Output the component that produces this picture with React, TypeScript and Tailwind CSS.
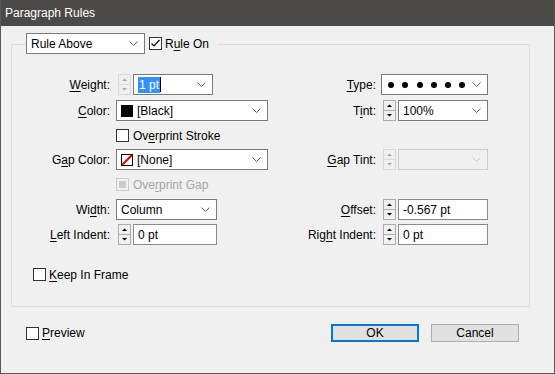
const Chevron = ({ light }: { light?: boolean }) => (
  <svg width="9" height="5" viewBox="0 0 9 5" className="shrink-0">
    <polyline
      points="0.5,0.5 4.5,4.5 8.5,0.5"
      fill="none"
      stroke={light ? "#c9c9c9" : "#5f5f5f"}
      strokeWidth="1"
    />
  </svg>
);

const Spinner = ({ disabled }: { disabled?: boolean }) => {
  const line = disabled ? "#d9d9d9" : "#adadad";
  const tri = disabled ? "#a8a8a8" : "#000";
  return (
    <svg width="13" height="21" viewBox="0 0 13 21" className="shrink-0">
      <rect x="0.5" y="0.5" width="12" height="20" fill="#f0f0f0" stroke={line} />
      <line x1="0" y1="10.5" x2="13" y2="10.5" stroke={line} />
      <polygon points="4,7 9,7 6.5,4.5" fill={tri} />
      <polygon points="4,14 9,14 6.5,16.5" fill={tri} />
    </svg>
  );
};

const Box = ({ checked, disabled }: { checked?: boolean; disabled?: boolean }) => (
  <div
    className={`w-[13px] h-[13px] shrink-0 border flex items-center justify-center ${
      disabled ? "border-[#cccccc] bg-[#f0f0f0]" : "border-[#333333] bg-white"
    }`}
  >
    {disabled && <div className="w-[7px] h-[7px] bg-[#cccccc]" />}
    {checked && (
      <svg width="11" height="11" viewBox="0 0 11 11">
        <polyline points="1.5,5.5 4,8 9.5,2" fill="none" stroke="#000" strokeWidth="1.2" />
      </svg>
    )}
  </div>
);

const Select = ({ w, children, disabled }: any) => (
  <div
    style={{ width: w }}
    className={`h-[21px] shrink-0 flex items-center justify-between pl-[4px] pr-[6px] border ${
      disabled ? "border-[#cccccc] bg-[#f0f0f0]" : "border-[#7a7a7a] bg-white"
    }`}
  >
    <div className="flex items-center gap-[4px] whitespace-nowrap">{children}</div>
    <Chevron light={disabled} />
  </div>
);

const Field = ({ w, children }: any) => (
  <div
    style={{ width: w }}
    className="h-[21px] shrink-0 flex items-center pl-[4px] border border-[#8a8a8a] bg-white whitespace-nowrap"
  >
    {children}
  </div>
);

const LeftLabel = ({ children }: any) => (
  <div className="w-[98px] text-right shrink-0 whitespace-nowrap">{children}</div>
);

const RightLabel = ({ children }: any) => (
  <div className="w-[100px] text-right shrink-0 whitespace-nowrap">{children}</div>
);

const Half = ({ children }: any) => <div className="w-[264px] shrink-0 flex items-center">{children}</div>;

export default function App() {
  return (
    <div className="w-[555px] h-[374px] bg-[#f0f0f0] border-x border-b border-[#585858] text-[12px] text-black font-['Liberation_Sans',Arial,sans-serif] leading-none flex flex-col overflow-hidden">
      <div className="h-[26px] shrink-0 bg-[#4c4a47] text-white text-[12px] flex items-center pl-[4px]">
        Paragraph Rules
      </div>

      <div className="ml-[10px] mt-[18px] w-[519px] h-[263px] border border-[#dcdcdc] flex flex-col">
        <div className="-mt-[12px] ml-[14px] w-fit flex items-center bg-[#f0f0f0] pr-[9px]">
          <Select w={119}>
            <span className="h-[20px] flex items-center">Rule Above</span>
          </Select>
          <div className="ml-[4px] flex items-center gap-[3px]">
            <Box checked />
            <span>
              R<u className="underline-offset-2">u</u>le On
            </span>
          </div>
        </div>

        <div className="mt-[20px] flex h-[21px]">
          <Half>
            <LeftLabel>
              <u className="underline-offset-2">W</u>eight:
            </LeftLabel>
            <div className="ml-[8px] flex items-center gap-[2px]">
              <Spinner disabled />
              <Select w={80}>
                <div className="flex items-center gap-0">
                  <span className="bg-[#3391ff] text-white px-[1px] py-[2px]">1 pt</span>
                  <span className="w-px h-[15px] bg-black" />
                </div>
              </Select>
            </div>
          </Half>
          <Half>
            <RightLabel>
              <u className="underline-offset-2">T</u>ype:
            </RightLabel>
            <div className="ml-[5px]">
              <Select w={107}>
                <div className="flex gap-[8.3px] pl-[2px]">
                  {[0, 1, 2, 3, 4, 5].map((i) => (
                    <span key={i} className="w-[6px] h-[6px] rounded-full bg-black" />
                  ))}
                </div>
              </Select>
            </div>
          </Half>
        </div>

        <div className="mt-[5px] flex h-[21px]">
          <Half>
            <LeftLabel>
              <u className="underline-offset-2">C</u>olor:
            </LeftLabel>
            <div className="ml-[6px]">
              <Select w={152}>
                <span className="w-[12px] h-[12px] bg-black" />
                <span>[Black]</span>
              </Select>
            </div>
          </Half>
          <Half>
            <RightLabel>
              T<u className="underline-offset-2">i</u>nt:
            </RightLabel>
            <div className="ml-[7px] flex items-center gap-[2px]">
              <Spinner />
              <Select w={90}>
                <span>100%</span>
              </Select>
            </div>
          </Half>
        </div>

        <div className="mt-[8px] flex h-[13px] items-center">
          <div className="ml-[104px] flex items-center gap-[4px]">
            <Box />
            <span>
              Ov<u className="underline-offset-2">e</u>rprint Stroke
            </span>
          </div>
        </div>

        <div className="mt-[7px] flex h-[21px]">
          <Half>
            <LeftLabel>
              G<u className="underline-offset-2">a</u>p Color:
            </LeftLabel>
            <div className="ml-[6px]">
              <Select w={152}>
                <svg width="12" height="12" viewBox="0 0 12 12">
                  <rect x="0.5" y="0.5" width="11" height="11" fill="#fff" stroke="#000" />
                  <line x1="1" y1="11" x2="11" y2="1" stroke="#e00000" strokeWidth="2" />
                </svg>
                <span>[None]</span>
              </Select>
            </div>
          </Half>
          <Half>
            <RightLabel>
              <u className="underline-offset-2">G</u>ap Tint:
            </RightLabel>
            <div className="ml-[7px] flex items-center gap-[2px]">
              <Spinner disabled />
              <Select w={90} disabled>
                <span />
              </Select>
            </div>
          </Half>
        </div>

        <div className="mt-[8px] flex h-[13px] items-center">
          <div className="ml-[104px] flex items-center gap-[4px] text-[#a6a6a6]">
            <Box disabled />
            <span>
              Ove<u className="underline-offset-2">r</u>print Gap
            </span>
          </div>
        </div>

        <div className="mt-[8px] flex h-[21px]">
          <Half>
            <LeftLabel>
              Wi<u className="underline-offset-2">d</u>th:
            </LeftLabel>
            <div className="ml-[6px]">
              <Select w={101}>
                <span>Column</span>
              </Select>
            </div>
          </Half>
          <Half>
            <RightLabel>
              <u className="underline-offset-2">O</u>ffset:
            </RightLabel>
            <div className="ml-[7px] flex items-center gap-[2px]">
              <Spinner />
              <Field w={90}>-0.567 pt</Field>
            </div>
          </Half>
        </div>

        <div className="mt-[4px] flex h-[21px]">
          <Half>
            <LeftLabel>
              <u className="underline-offset-2">L</u>eft Indent:
            </LeftLabel>
            <div className="ml-[8px] flex items-center gap-[2px]">
              <Spinner />
              <Field w={84}>0 pt</Field>
            </div>
          </Half>
          <Half>
            <RightLabel>
              Rig<u className="underline-offset-2">h</u>t Indent:
            </RightLabel>
            <div className="ml-[7px] flex items-center gap-[2px]">
              <Spinner />
              <Field w={90}>0 pt</Field>
            </div>
          </Half>
        </div>

        <div className="mt-[23px] flex h-[13px] items-center">
          <div className="ml-[21px] flex items-center gap-[3px]">
            <Box />
            <span>
              <u className="underline-offset-2">K</u>eep In Frame
            </span>
          </div>
        </div>
      </div>

      <div className="mt-[17px] flex items-center h-[18px]">
        <div className="ml-[25px] flex items-center gap-[3px]">
          <Box />
          <span>
            <u className="underline-offset-2">P</u>review
          </span>
        </div>
        <div className="ml-auto mr-[35px] flex gap-[12px]">
          <button className="w-[88px] h-[18px] bg-[#e1e1e1] border-2 border-[#0078d7] flex items-center justify-center">
            OK
          </button>
          <button className="w-[88px] h-[18px] bg-[#e1e1e1] border border-[#adadad] flex items-center justify-center">
            Cancel
          </button>
        </div>
      </div>
    </div>
  );
}
